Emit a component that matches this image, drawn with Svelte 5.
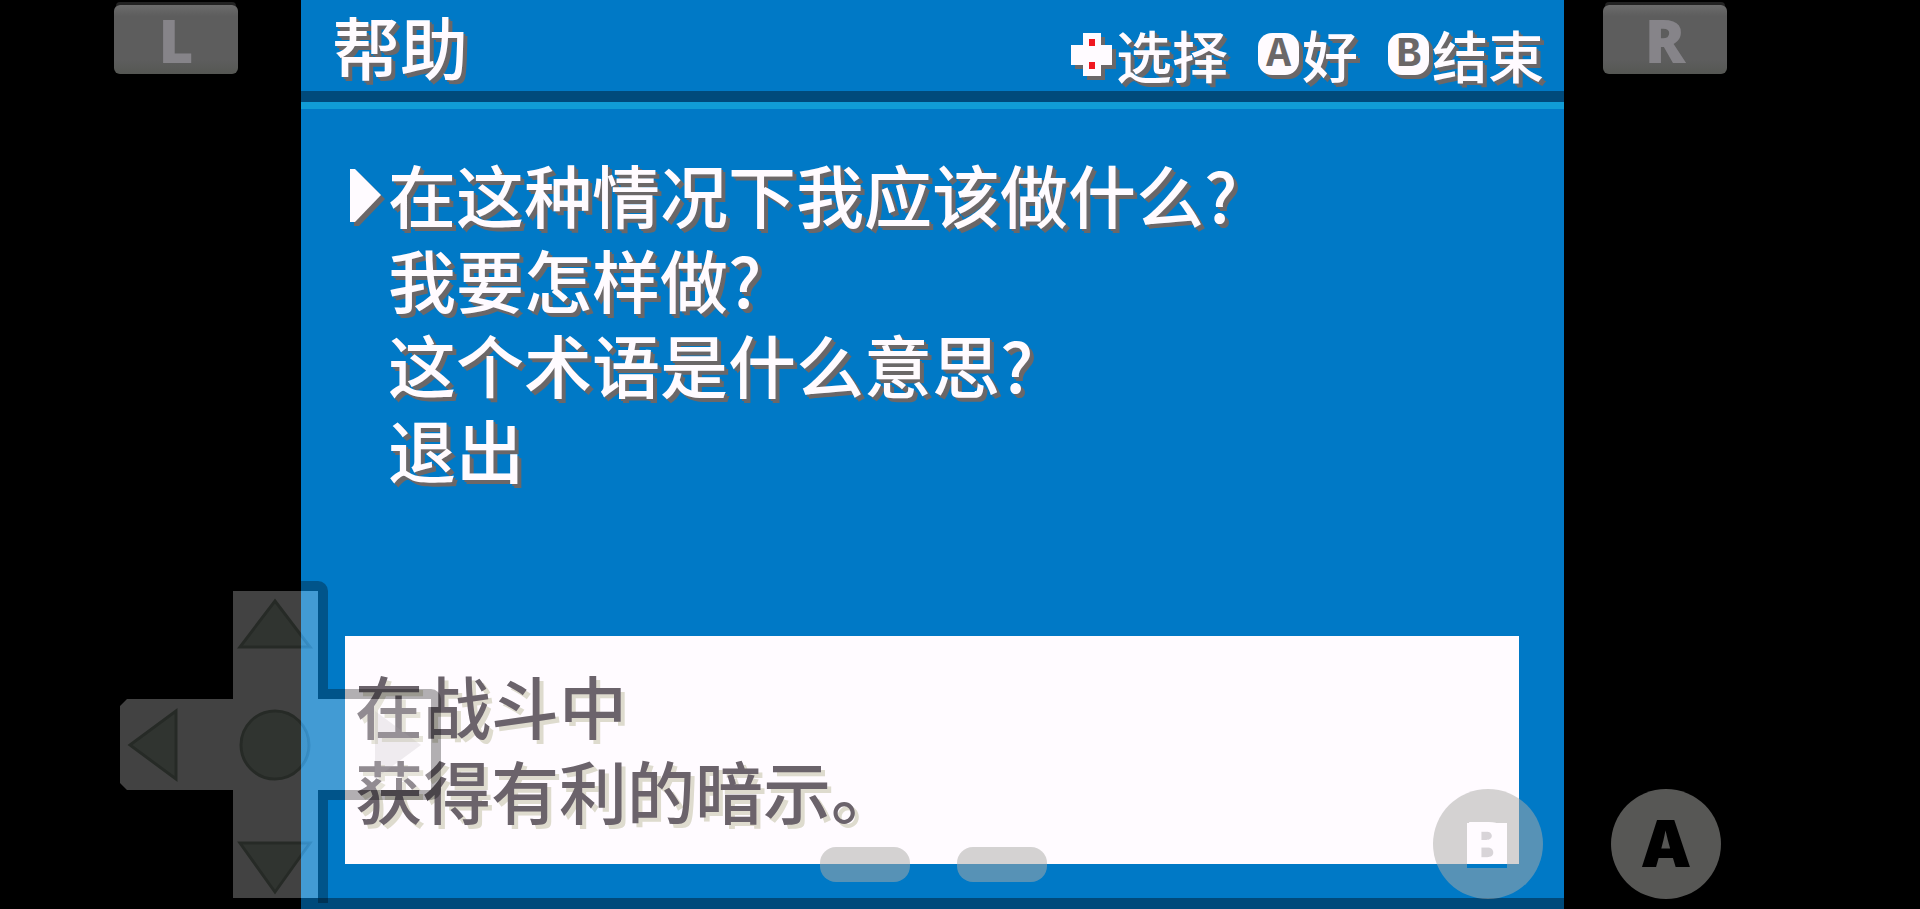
<script>
  const items = ['在这种情况下我应该做什么?', '我要怎样做?', '这个术语是什么意思?', '退出'];
  let selected = $state(0);
</script>

<div class="stage">
  <main class="screen">
    <header>
      <h1>帮助</h1>
      <div class="hints">
        <span class="hint">
          <svg class="key" viewBox="0 0 42 48" aria-hidden="true">
            <path class="shade" d="M16 7h18v12h11v20h-11v11h-18v-11h-12v-20h12z" />
            <path class="face" d="M12 3h18v12h11v20h-11v11h-18v-11h-12v-20h12z" />
            <path class="red" d="M18 9h6v7h-6zM18 32h6v7h-6z" />
          </svg>选择
        </span>
        <span class="hint"><span class="badge">A</span>好</span>
        <span class="hint"><span class="badge">B</span>结束</span>
      </div>
    </header>

    <ul>
      {#each items as item, i}
        <li>
          <button class="item" onclick={() => (selected = i)}>
            <svg class="cursor" viewBox="0 0 38 60" aria-hidden="true">
              {#if i === selected}
                <path class="shade" d="M4 9h5l26 26-26 27h-5z" />
                <path class="face" d="M0 5h5l26 26-26 27h-5z" />
              {/if}
            </svg>{item}
          </button>
        </li>
      {/each}
    </ul>

    <p class="tip">在战斗中<br />获得有利的暗示。</p>
  </main>

  <button class="shoulder left">L</button>
  <button class="shoulder right">R</button>

  <svg class="dpad" viewBox="0 0 332 332" role="img" aria-label="D-pad">
    <defs>
      <linearGradient id="mark-fill" gradientUnits="userSpaceOnUse" x1="0" y1="0" x2="332" y2="0">
        <stop offset="0.56" stop-color="#303430" />
        <stop offset="0.56" stop-color="#303430" stop-opacity="0.04" />
      </linearGradient>
      <linearGradient id="mark-line" gradientUnits="userSpaceOnUse" x1="0" y1="0" x2="332" y2="0">
        <stop offset="0.56" stop-color="#262a26" />
        <stop offset="0.56" stop-color="#004a7b" stop-opacity="0.18" />
      </linearGradient>
    </defs>
    <path class="rim" d="M118 5H203a5 5 0 0 1 5 5V113H316a5 5 0 0 1 5 5V209a5 5 0 0 1-5 5H208V322" />
    <path class="arm" d="M118 10H203V118H316V209H203V317H118V209H12L5 202V125L12 118H118Z" />
    <g class="mark">
      <path d="M160 20L195 66H125Z" />
      <path d="M160 311L195 262H125Z" />
      <path d="M15 164L61 130V198Z" />
      <circle cx="160" cy="164" r="34" />
    </g>
    <path class="ghost" d="M306 164L260 130V198Z" />
  </svg>

  <div class="pills">
    <button class="pill" aria-label="Select"></button>
    <button class="pill" aria-label="Start"></button>
  </div>

  <button class="round b" aria-label="B">
    <svg viewBox="0 0 110 110" aria-hidden="true">
      <path class="hole" d="M34 34h40v41h-40z" />
      <path class="counter" d="M48 40h14v30h-14z" />
      <text x="54" y="78" text-anchor="middle">B</text>
      <path class="base" d="M34 75h40v4h-40z" />
    </svg>
  </button>
  <button class="round a">A</button>
</div>

<style>
  :global(body) { margin: 0; background: #000; }
  button { border: 0; padding: 0; margin: 0; background: none; color: inherit; font: inherit; cursor: pointer; }
  svg { display: block; overflow: visible; }

  .stage {
    position: relative;
    display: grid;
    grid-template-columns: 301fr 1263fr 356fr;
    min-height: 100vh;
    overflow: hidden;
    background: #000;
  }
  .screen {
    grid-column: 2;
    display: flex;
    flex-direction: column;
    box-sizing: border-box;
    background: #0079c6;
    border-bottom: 11px solid #004a7b;
    color: #fffbff;
    font: 500 68px/84px "Noto Sans CJK SC", sans-serif;
    text-shadow: 2px 2px #6b6768, 4px 4px #6b6768;
    white-space: nowrap;
  }
  header {
    display: flex;
    justify-content: space-between;
    height: 91px;
    padding: 0 20px 0 31px;
    border-bottom: 11px solid #004a7b;
    box-shadow: 0 7px #109cd6;
  }
  h1 { margin: 0; font: inherit; line-height: 92px; }
  .hints { display: flex; gap: 30px; font-size: 56px; line-height: 104px; }
  .hint { display: flex; align-items: center; gap: 3px; height: 108px; }
  .key { width: 42px; height: 48px; }
  .shade { fill: #6b6768; }
  .face { fill: #fffbff; }
  .red { fill: #f01820; }
  .badge {
    width: 41px;
    height: 42px;
    border-radius: 14px;
    background: #fffbff;
    box-shadow: 4px 4px #6b6768;
    color: #6b6768;
    text-shadow: none;
    text-align: center;
    font: 700 42px/44px "Liberation Mono", monospace;
  }

  ul { list-style: none; margin: 0; padding: 49px 0 0 49px; }
  .item { display: flex; align-items: center; height: 85px; text-shadow: inherit; }
  .cursor { width: 38px; height: 60px; }

  .tip {
    margin: auto 45px 34px 44px;
    padding: 26px 10px 34px;
    height: 168px;
    background: #fffbff;
    color: #6b636b;
    font-weight: 500;
    line-height: 85px;
    text-shadow: 4px 4px #dedbce;
  }

  .shoulder {
    position: absolute;
    top: 5px;
    width: 124px;
    height: 69px;
    border-radius: 6px;
    background: linear-gradient(#6c6c6c, #5d5d5d 16%, #5d5d5d 80%, #555753);
    box-shadow: 0 -5px 0 -2px #222;
    color: #868489;
    font: 800 60px/64px "Open Sans", sans-serif;
  }
  .left { left: 114px; }
  .right { right: 193px; }

  .dpad { position: absolute; left: 115px; bottom: -4px; width: 332px; height: 332px; }
  .rim { fill: none; stroke: #000; stroke-opacity: 0.3; stroke-width: 10px; }
  .arm { fill: #fff; fill-opacity: 0.26; }
  .mark { fill: url(#mark-fill); stroke: url(#mark-line); stroke-width: 3px; }
  .ghost { fill: #b0a8b0; fill-opacity: 0.2; }

  .pills { position: absolute; left: 820px; bottom: 27px; display: flex; gap: 47px; }
  .pill { width: 90px; height: 35px; border-radius: 16px; background: rgb(170 171 167 / 0.51); }

  .round {
    position: absolute;
    bottom: 10px;
    width: 110px;
    height: 110px;
    border-radius: 50%;
    background: rgb(170 171 167 / 0.51);
    color: #000;
    font: 900 64px/102px "Inter", sans-serif;
  }
  .b { right: 377px; }
  .b text { fill: #fffbff; font: 900 62px "Inter", sans-serif; }
  .a { right: 199px; }
  .hole { fill: #fffbff; }
  .base { fill: #0079c6; }
  .counter { fill: #d8d4d8; }
</style>
